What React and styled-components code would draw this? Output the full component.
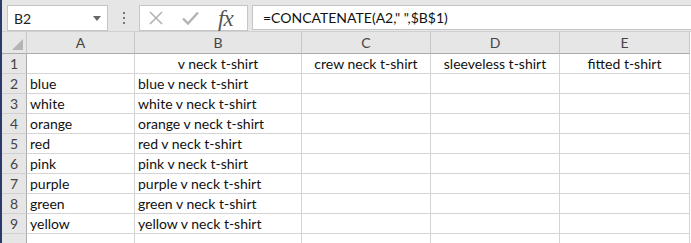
import styled, { createGlobalStyle } from "styled-components";

const Global = createGlobalStyle`
  html, body { margin: 0; padding: 0; background: #fff; }
  body { font-family: Lato, "Open Sans", sans-serif; overflow: hidden; }
`;

const Frame = styled.div`
  display: flex;
  width: 691px;
  height: 243px;
  overflow: hidden;
`;

const Strip = styled.div`
  width: 2px;
  flex: none;
  background: #2a3b6b;
`;

const Main = styled.div`
  flex: 1;
  display: flex;
  flex-direction: column;
`;

const Toolbar = styled.div`
  height: 38px;
  box-sizing: border-box;
  background: #e6e6e6;
  display: flex;
  align-items: flex-start;
  padding: 5px 0 0 5px;
  border-bottom: 1px solid #d0d0d0;
`;

const NameBox = styled.div`
  width: 101px;
  height: 26px;
  box-sizing: border-box;
  background: #fff;
  border: 1px solid #c6c6c6;
  display: flex;
  align-items: center;
  justify-content: space-between;
  padding: 0 6px 0 6px;
  font-size: 14px;
  color: #222;
`;

const Caret = styled.span`
  width: 0;
  height: 0;
  border-left: 4px solid transparent;
  border-right: 4px solid transparent;
  border-top: 5px solid #666;
`;

const Dots = styled.div`
  width: 31px;
  height: 26px;
  display: flex;
  flex-direction: column;
  align-items: center;
  justify-content: center;
  gap: 3px;
  span {
    width: 2px;
    height: 2px;
    background: #777;
  }
`;

const FxBox = styled.div`
  width: 109px;
  height: 26px;
  box-sizing: border-box;
  background: #fff;
  border: 1px solid #c6c6c6;
  display: flex;
  align-items: center;
  padding-left: 9px;
  gap: 19px;
`;

const Fx = styled.span`
  font-family: "Liberation Serif", serif;
  font-style: italic;
  font-size: 23px;
  color: #555;
  letter-spacing: -1px;
  line-height: 1;
`;

const Formula = styled.div`
  flex: 1;
  height: 25px;
  margin-left: 4px;
  box-sizing: border-box;
  background: #fff;
  border: 1px solid #c6c6c6;
  border-right: none;
  display: flex;
  align-items: center;
  padding-left: 10px;
  font-size: 14px;
  color: #111;
`;

const Grid = styled.div`
  display: grid;
  grid-template-columns: 25px 108px 167px 129px 129px 130px;
  grid-auto-rows: 20px;
  grid-template-rows: 22px;
`;

const Head = styled.div`
  background: #e6e6e6;
  border-right: 1px solid #c8c8c8;
  border-bottom: 1px solid #ababab;
  box-sizing: border-box;
  display: flex;
  align-items: center;
  justify-content: center;
  font-size: 14px;
  color: #444;
  position: relative;
`;

const Corner = styled(Head)`
  &::after {
    content: "";
    position: absolute;
    right: 3px;
    bottom: 3px;
    width: 0;
    height: 0;
    border-left: 11px solid transparent;
    border-bottom: 11px solid #b4b4b4;
  }
`;

const RowNum = styled.div`
  background: #e6e6e6;
  border-right: 1px solid #ababab;
  border-bottom: 1px solid #d0d0d0;
  box-sizing: border-box;
  display: flex;
  align-items: center;
  justify-content: center;
  font-size: 14px;
  color: #444;
`;

const Cell = styled.div`
  border-right: 1px solid #d4d4d4;
  border-bottom: 1px solid #d4d4d4;
  box-sizing: border-box;
  display: flex;
  align-items: center;
  justify-content: ${(p) => (p.$center ? "center" : "flex-start")};
  padding: 0 3px;
  font-size: 14px;
  color: #111;
  white-space: nowrap;
  overflow: hidden;
`;

const cols = ["A", "B", "C", "D", "E"];
const headers = ["", "v neck t-shirt", "crew neck t-shirt", "sleeveless t-shirt", "fitted t-shirt"];
const colours = ["blue", "white", "orange", "red", "pink", "purple", "green", "yellow"];

export default function App() {
  return (
    <>
      <Global />
      <Frame>
        <Strip />
        <Main>
          <Toolbar>
            <NameBox>
              B2
              <Caret />
            </NameBox>
            <Dots>
              <span />
              <span />
              <span />
            </Dots>
            <FxBox>
              <svg width="14" height="14" viewBox="0 0 14 14">
                <path d="M1 1L13 13M13 1L1 13" stroke="#b3b3b3" strokeWidth="1.6" fill="none" />
              </svg>
              <svg width="17" height="14" viewBox="0 0 17 14">
                <path d="M1 7.5L6 12.5L16 1.5" stroke="#b3b3b3" strokeWidth="2.4" fill="none" />
              </svg>
              <Fx>fx</Fx>
            </FxBox>
            <Formula>=CONCATENATE(A2," ",$B$1)</Formula>
          </Toolbar>
          <Grid>
            <Corner />
            {cols.map((c) => (
              <Head key={c}>{c}</Head>
            ))}
            <RowNum>1</RowNum>
            {headers.map((h, i) => (
              <Cell key={i} $center>
                {h}
              </Cell>
            ))}
            {colours.map((c, i) => (
              <Row key={c} n={i + 2} colour={c} />
            ))}
            <RowNum />
            {cols.map((c) => (
              <Cell key={c} />
            ))}
          </Grid>
        </Main>
      </Frame>
    </>
  );
}

function Row({ n, colour }) {
  return (
    <>
      <RowNum>{n}</RowNum>
      <Cell>{colour}</Cell>
      <Cell>{colour} v neck t-shirt</Cell>
      <Cell />
      <Cell />
      <Cell />
    </>
  );
}
